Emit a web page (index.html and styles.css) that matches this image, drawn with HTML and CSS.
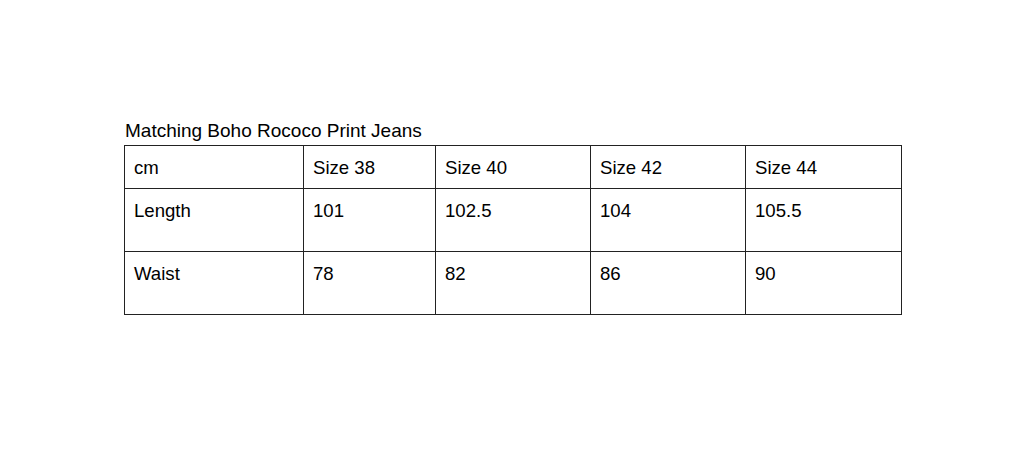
FILE: index.html
```html
<!DOCTYPE html>
<html>
<head>
<meta charset="utf-8">
<link rel="stylesheet" href="styles.css">
</head>
<body>
<div class="page">
  <div class="title">Matching Boho Rococo Print Jeans</div>
  <table class="sizes">
    <tr class="head">
      <td class="c1">cm</td><td class="c2">Size 38</td><td class="c3">Size 40</td><td class="c4">Size 42</td><td class="c5">Size 44</td>
    </tr>
    <tr class="row">
      <td>Length</td><td>101</td><td>102.5</td><td>104</td><td>105.5</td>
    </tr>
    <tr class="row">
      <td>Waist</td><td>78</td><td>82</td><td>86</td><td>90</td>
    </tr>
  </table>
</div>
</body>
</html>
```

FILE: styles.css
```css
html, body {
  margin: 0;
  padding: 0;
  background: #fff;
}
body {
  font-family: "Liberation Sans", Arial, sans-serif;
  color: #000;
}
.page {
  padding: 119px 0 0 124px;
}
.title {
  font-size: 19px;
  line-height: 24px;
  padding-left: 1px;
  margin-bottom: 2px;
}
.sizes {
  border-collapse: collapse;
  table-layout: fixed;
  width: 777px;
  font-size: 18.6px;
}
.sizes td {
  border: 1px solid #222;
  padding: 11px 9px 0 9px;
  vertical-align: top;
  line-height: 21px;
}
.sizes .c1 { width: 160px; }
.sizes .c2 { width: 113px; }
.sizes .c3 { width: 136px; }
.sizes .c4 { width: 136px; }
.sizes .c5 { width: 137px; }
.head td { height: 31px; }
.row td { height: 51px; }
```
